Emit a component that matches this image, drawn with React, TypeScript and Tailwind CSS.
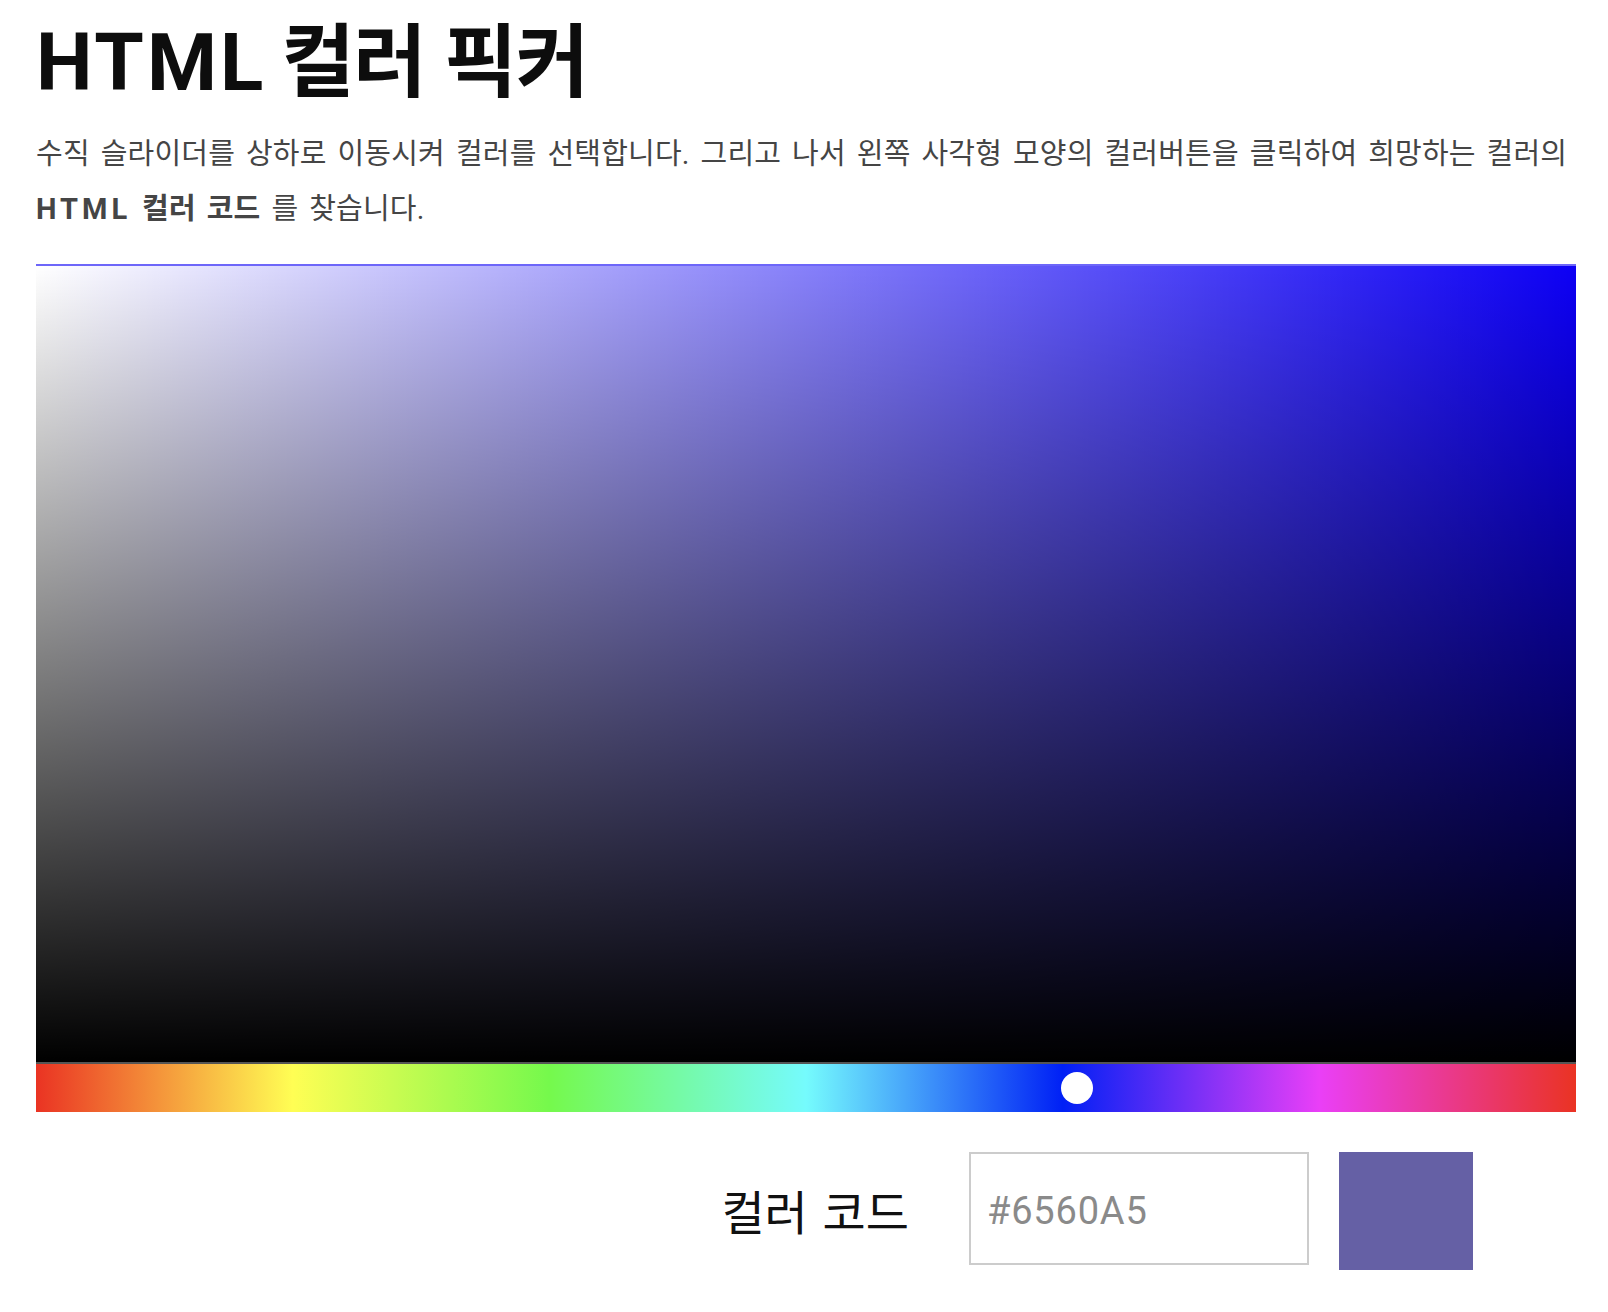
import React, { useState } from "react";

// 색상 피커 페이지
const hueStops =
  "bg-[linear-gradient(to_right,#ea3323_0%,#fffe54_16.67%,#75f94c_33.33%,#75fbfd_50%,#0020f5_66.67%,#ea3ff7_83.33%,#ea3323_100%)]";

const App = () => {
  const [code] = useState("#6560A5");

  return (
    <div className="min-h-screen bg-white pl-[36px] pr-[32px] font-['Roboto','Noto_Sans_CJK_KR',sans-serif]">
      {/* 제목 */}
      <h1 className="pt-[23px] text-[80px] leading-none font-bold text-[#0d0d0d]">
        <span className="tracking-[3px]">HTML</span> <span className="ml-[-5px] tracking-[-1.5px]">컬러 픽커</span>
      </h1>

      {/* 설명 */}
      <p className="mt-[24px] text-[29px] leading-[55px] tracking-[0.2px] break-keep text-[#454545] [word-spacing:3.5px]">
        수직 슬라이더를 상하로 이동시켜 컬러를 선택합니다. 그리고 나서 왼쪽 사각형 모양의 컬러버튼을 클릭하여 희망하는 컬러의{" "}
        <strong className="font-bold">
          <span className="tracking-[4px]">HTML</span> 컬러 코드
        </strong>{" "}
        를 찾습니다.
      </p>

      {/* 채도/명도 영역 */}
      <div className="mt-[27px] h-[798px] w-full border-t-2 border-white/40 bg-[#0d00f5]">
        <div className="h-full w-full bg-[linear-gradient(to_right,#ffffff,rgba(255,255,255,0))]">
          <div className="h-full w-full bg-[linear-gradient(to_bottom,rgba(0,0,0,0),#000000)]" />
        </div>
      </div>

      {/* 색상 슬라이더 */}
      <div className={`relative h-[50px] w-full border-t-2 border-[#555555] ${hueStops}`}>
        <div className="absolute left-[1025px] top-[8px] h-[32px] w-[32px] rounded-full bg-white" />
      </div>

      {/* 컬러 코드 */}
      <div className="mt-[40px] mr-[103px] flex items-start justify-end">
        <span className="mt-[38px] text-[47px] leading-none text-[#111111] [word-spacing:3px]">컬러 코드</span>
        <input
          readOnly
          value={code}
          className="ml-[60px] h-[113px] w-[340px] border-2 border-[#cccccc] bg-white pt-[4px] pl-[16px] text-[38px] tracking-[0.8px] text-[#8a8a8a] outline-none"
        />
        <div className="ml-[30px] h-[118px] w-[134px] bg-[#6560A5]" />
      </div>
    </div>
  );
};

export default App;
